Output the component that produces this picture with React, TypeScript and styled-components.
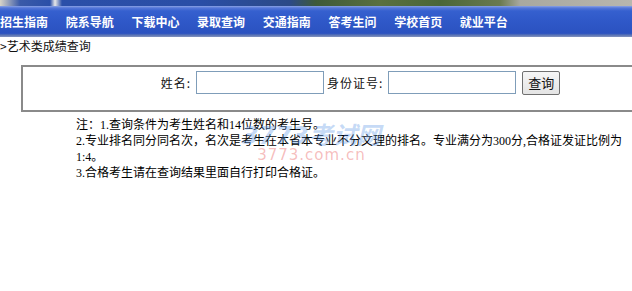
import React from "react";
import styled, { createGlobalStyle } from "styled-components";

const GlobalStyle = createGlobalStyle`
  body {
    margin: 0;
    background: #ffffff;
    overflow: hidden;
    font-family: "Liberation Serif", "Noto Sans CJK SC", serif;
    font-size: 12px;
    color: #000;
  }
`;

const navItems = [
  "招生指南",
  "院系导航",
  "下载中心",
  "录取查询",
  "交通指南",
  "答考生问",
  "学校首页",
  "就业平台",
];

const notes = [
  "注：1.查询条件为考生姓名和14位数的考生号。",
  "2.专业排名同分同名次，名次是考生在本省本专业不分文理的排名。专业满分为300分,合格证发证比例为1:4。",
  "3.合格考生请在查询结果里面自行打印合格证。",
];

const App = () => {
  return (
    <Page>
      <GlobalStyle />
      <Banner />
      <NavBar>
        {navItems.map((item) => (
          <NavItem key={item}>{item}</NavItem>
        ))}
      </NavBar>
      <Crumb>&gt;艺术类成绩查询</Crumb>
      <SearchBox>
        <Label>姓名:</Label>
        <TextInput type="text" />
        <Label>身份证号:</Label>
        <TextInput type="text" />
        <QueryButton type="button">查询</QueryButton>
      </SearchBox>
      <Notes>
        {notes.map((n) => (
          <p key={n}>{n}</p>
        ))}
        <Watermark>
          <span className="big">3773考试网</span>
          <span className="small">3773.com.cn</span>
        </Watermark>
      </Notes>
    </Page>
  );
};

export default App;

const Page = styled.div`
  width: 632px;
  overflow: hidden;
`;

const Banner = styled.div`
  height: 6px;
  background: linear-gradient(
    90deg,
    #d8d4c8 0,
    #3a5aa8 20px,
    #2b4fa8 50px,
    #e8e8e8 55px,
    #2b4fa8 62px,
    #2a4ea6 200px,
    #2c4a86 290px,
    #3e5a3a 316px,
    #5a7040 380px,
    #4a6638 440px,
    #6a7a50 500px,
    #a8a8a0 520px,
    #b8b6ae 632px
  );
`;

const NavBar = styled.div`
  height: 31px;
  display: flex;
  align-items: center;
  gap: 17.7px;
  background: linear-gradient(
    #8aa2e4 0,
    #5476d8 2px,
    #3560cf 5px,
    #2f58c8 50%,
    #2b52c0 88%,
    #5b74b4 94%,
    #8494c0 100%
  );
`;

const NavItem = styled.span`
  width: 48px;
  flex: none;
  color: #ffffff;
  font-family: "Noto Sans CJK SC", sans-serif;
  font-weight: bold;
  font-size: 12px;
  line-height: 14px;
  white-space: nowrap;
`;

const Crumb = styled.div`
  height: 17px;
  line-height: 18px;
  font-family: "Noto Sans CJK SC", sans-serif;
  font-size: 12px;
  color: #111;
`;

const SearchBox = styled.div`
  margin: 11px 0 0 21px;
  width: 675px;
  height: 43px;
  border: 2px solid #8a8a8a;
  display: flex;
  align-items: center;
  justify-content: center;
  box-sizing: content-box;

  & > * {
    margin-top: -12px;
  }
`;

const Label = styled.span`
  font-family: "Noto Sans CJK SC", sans-serif;
  font-size: 12px;
  letter-spacing: 1px;
  color: #111;
  margin-right: 5px;
`;

const TextInput = styled.input`
  width: 122px;
  height: 17px;
  padding: 2px;
  border: 1px solid #7f9db9;
  background: #fff;
  margin-right: 3px;
`;

const QueryButton = styled.button`
  margin-left: 3px;
  width: 38px;
  height: 24px;
  padding: 0;
  border: 1px solid #707070;
  border-radius: 2px;
  background: linear-gradient(#f6f6f6, #e4e4e4);
  font-family: "Noto Sans CJK SC", sans-serif;
  font-size: 13px;
  color: #111;
`;

const Notes = styled.div`
  position: relative;
  margin: 5px 0 0 76px;
  width: 552px;

  p {
    margin: 0;
    line-height: 16px;
    font-size: 12px;
  }
`;

const Watermark = styled.div`
  position: absolute;
  left: 166px;
  top: 8px;
  display: flex;
  flex-direction: column;
  align-items: center;
  pointer-events: none;

  .big {
    font-family: "DejaVu Sans", "Noto Sans CJK SC", sans-serif;
    font-style: italic;
    font-weight: bold;
    font-size: 24px;
    line-height: 22px;
    color: rgba(90, 150, 230, 0.35);
  }
  .small {
    font-family: "DejaVu Sans", sans-serif;
    font-size: 15px;
    line-height: 16px;
    color: rgba(235, 110, 110, 0.45);
    letter-spacing: 1px;
  }
`;
